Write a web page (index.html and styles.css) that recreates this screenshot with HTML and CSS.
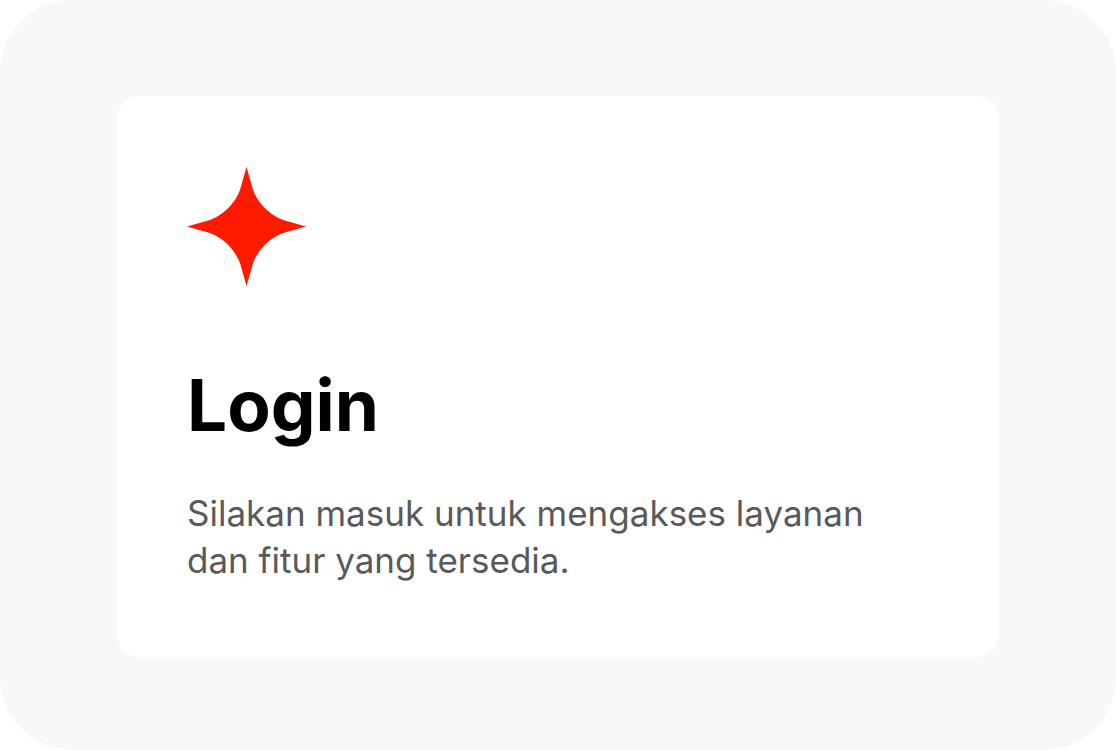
FILE: index.html
```html
<!DOCTYPE html>
<html lang="id">
<head>
<meta charset="UTF-8">
<meta name="viewport" content="width=device-width, initial-scale=1.0">
<title>Login</title>
<link rel="stylesheet" href="styles.css">
</head>
<body>
<main class="wrapper">
    <section class="card">
        <svg class="logo" viewBox="0 0 118 118" aria-hidden="true">
            <path d="M59 0L65 21C69 35 83 49 97 53L118 59L97 65C83 69 69 83 65 97L59 118L53 97C49 83 35 69 21 65L0 59L21 53C35 49 49 35 53 21Z"/>
        </svg>
        <h1 class="title">Login</h1>
        <p class="desc">Silakan masuk untuk mengakses layanan dan fitur yang tersedia.</p>
    </section>
</main>
</body>
</html>
```
FILE: styles.css
```css
*{
    box-sizing: border-box;
}
body{
    margin: 0;
    background: #fff;
    font-family: Inter, sans-serif;
}
.wrapper{
    min-height: 100vh;
    padding: 96px 117px 93px;
    display: flex;
    background: #f8f8f6;
    border-radius: 72px;
}
.card{
    flex: 1;
    padding: 71px 70px;
    background: #fff;
    border-radius: 22px;
}
.logo{
    display: block;
    width: 119px;
    height: 119px;
    fill: #ff1a00;
}
.title{
    margin: 75px 0 41px;
    font-size: 71px;
    line-height: 88px;
    font-weight: 700;
    color: #000;
}
.desc{
    margin: 0;
    font-size: 35px;
    line-height: 47px;
    font-weight: 400;
    color: #595959;
}
```
